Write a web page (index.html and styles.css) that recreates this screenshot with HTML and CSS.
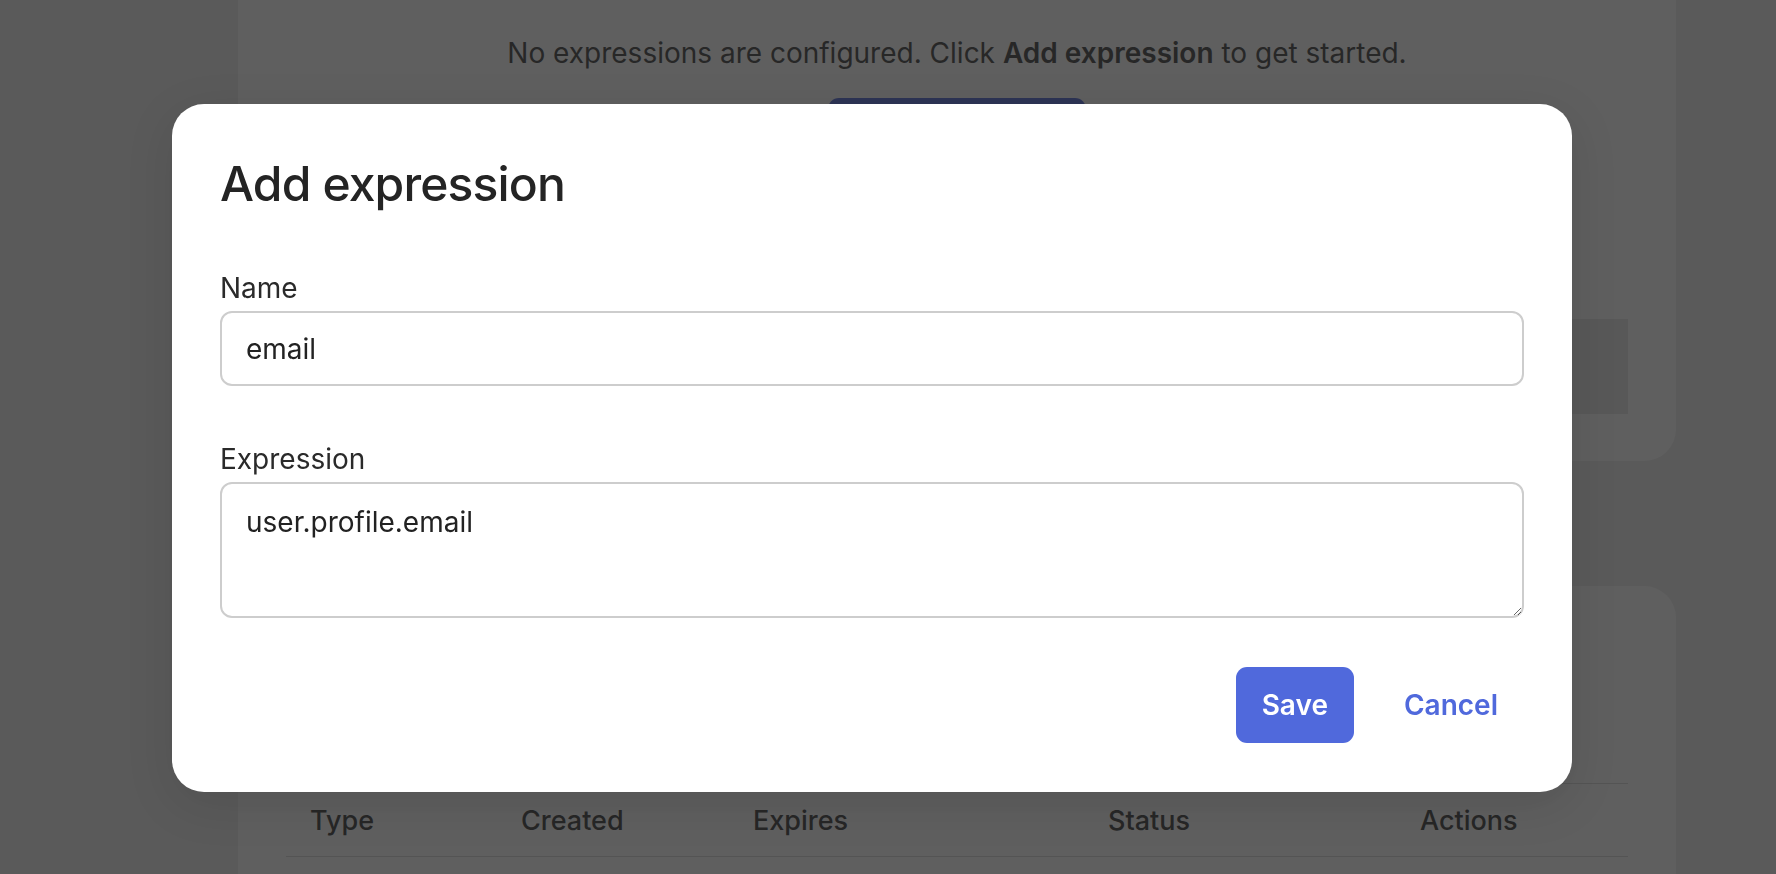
FILE: index.html
```html
<!DOCTYPE html>
<html lang="en">
<head>
<meta charset="utf-8">
<title>Add expression</title>
<link rel="stylesheet" href="styles.css">
</head>
<body>
<main class="page">
  <section class="card card-top">
    <p class="empty-text">No expressions are configured. Click <strong>Add expression</strong> to get started.</p>
    <div class="empty-action"><button class="btn-primary btn-bg" type="button">Add expression</button></div>
    <div class="info-box"></div>
  </section>
  <section class="card card-table">
    <div class="table-head">
      <div class="th">Type</div>
      <div class="th">Created</div>
      <div class="th">Expires</div>
      <div class="th">Status</div>
      <div class="th">Actions</div>
    </div>
  </section>
</main>

<div class="overlay">
  <div class="modal" role="dialog" aria-labelledby="modal-title">
    <h2 class="modal-title" id="modal-title">Add expression</h2>
    <div class="field">
      <label class="field-label" for="f-name">Name</label>
      <input class="field-input" id="f-name" type="text" value="email">
    </div>
    <div class="field">
      <label class="field-label" for="f-expr">Expression</label>
      <textarea class="field-textarea" id="f-expr">user.profile.email</textarea>
    </div>
    <div class="modal-actions">
      <button class="btn-primary" type="button">Save</button>
      <button class="btn-link" type="button">Cancel</button>
    </div>
  </div>
</div>
</body>
</html>
```

FILE: styles.css
```css
* { box-sizing: border-box; }

html, body {
  margin: 0;
  padding: 0;
}

body {
  font-family: Inter, "Noto Sans", "Liberation Sans", sans-serif;
  font-size: 28px;
  color: #3a3a3a;
  background: #eeeeee;
  height: 874px;
  overflow: hidden;
}

.page {
  padding: 0 100px 0 238px;
  display: flex;
  flex-direction: column;
  gap: 125px;
}

.card {
  background: #ffffff;
  border-radius: 32px;
  padding: 32px 48px 47px;
}

.card-top {
  border-radius: 0 0 32px 32px;
}

.empty-text {
  margin: 0;
  text-align: center;
  line-height: 42px;
  color: #3c3c3c;
}

.empty-text strong { font-weight: 600; }

.empty-action {
  display: flex;
  justify-content: center;
  margin-top: 24px;
}

.btn-primary {
  font-family: inherit;
  font-size: 28px;
  font-weight: 600;
  color: #ffffff;
  background: #5069dc;
  border: 0;
  border-radius: 11px;
  height: 76px;
  padding: 0 26px;
}

.btn-bg {
  width: 258px;
}

.info-box {
  margin-top: 145px;
  height: 95px;
  background: #e7e7e7;
}

.card-table {
  padding-top: 197px;
  height: 360px;
}

.table-head {
  display: grid;
  grid-template-columns: 211px 232px 355px 312px 1fr;
  border-top: 1px solid #d9d9d9;
  border-bottom: 1px solid #d9d9d9;
}

.th {
  padding: 17px 24px 15px;
  line-height: 40px;
  font-size: 27px;
  font-weight: 500;
  color: #3a3a3a;
}

/* modal */
.overlay {
  position: fixed;
  inset: 0;
  background: rgba(31, 31, 31, 0.714);
  display: flex;
  justify-content: center;
  align-items: flex-start;
  padding: 104px 32px 0 0;
}

.modal {
  width: 1400px;
  background: #ffffff;
  border-radius: 32px;
  padding: 49px 48px 49px;
  display: flex;
  flex-direction: column;
  gap: 53px;
  box-shadow: 0 12px 48px rgba(0, 0, 0, 0.12);
}

.modal-title {
  margin: 0;
  font-size: 48px;
  line-height: 62px;
  font-weight: 500;
  letter-spacing: -0.85px;
  color: #242424;
}

.field {
  display: flex;
  flex-direction: column;
  gap: 3px;
}

.field-label {
  line-height: 40px;
  color: #2a2a2a;
}

.field-input,
.field-textarea {
  font-family: inherit;
  font-size: 28px;
  color: #222222;
  background: #ffffff;
  border: 2px solid #cdcdcd;
  border-radius: 12px;
  padding: 0 24px;
  width: 100%;
  outline: none;
}

.field-input {
  height: 75px;
}

.field-textarea {
  height: 136px;
  padding-top: 21px;
  padding-bottom: 20px;
  line-height: normal;
  resize: vertical;
  display: block;
}

.modal-actions {
  display: flex;
  justify-content: flex-end;
  gap: 24px;
  margin-top: -4px;
}

.btn-link {
  font-family: inherit;
  font-size: 28px;
  font-weight: 600;
  color: #5069dc;
  background: transparent;
  border: 0;
  height: 76px;
  padding: 0 26px;
}
```
